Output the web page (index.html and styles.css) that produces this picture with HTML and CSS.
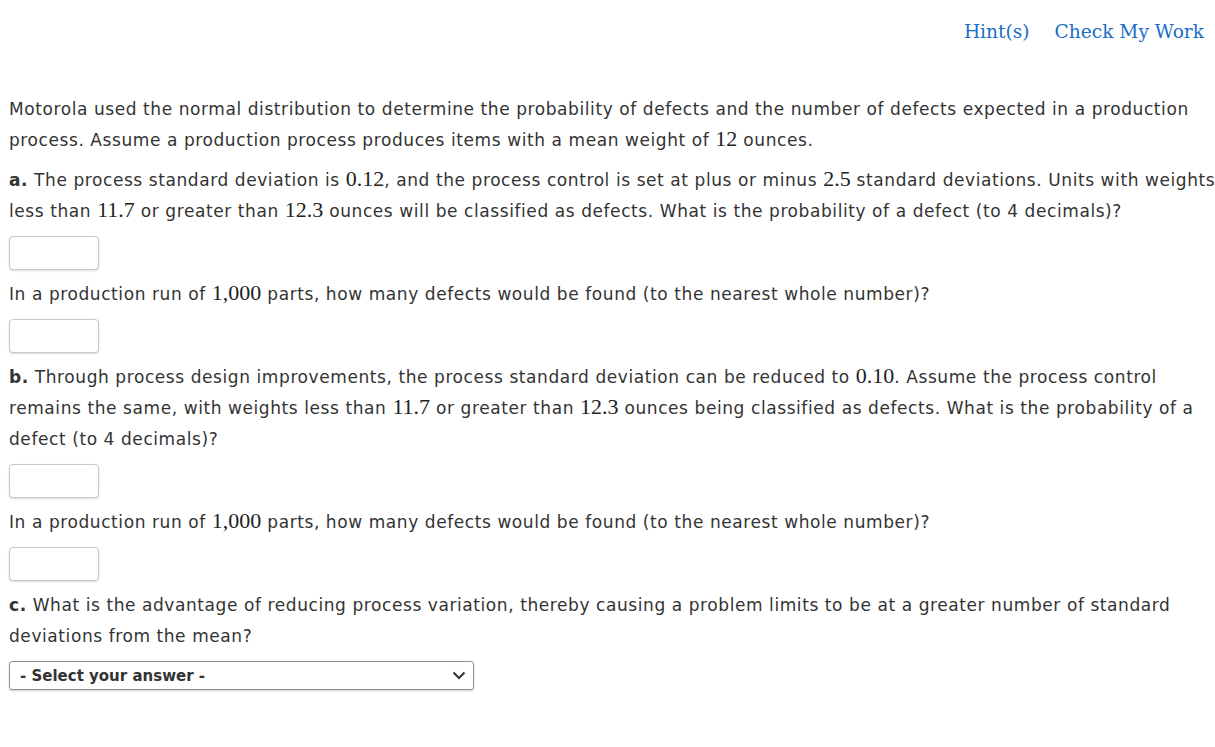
FILE: index.html
```html
<!DOCTYPE html>
<html>
<head>
<meta charset="utf-8">
<link rel="stylesheet" href="styles.css">
</head>
<body>
<div class="page">
  <div class="toolbar">
    <a class="tool-link" href="#">Hint(s)</a>
    <a class="tool-link" href="#">Check My Work</a>
  </div>
  <div class="content">
    <p>Motorola used the normal distribution to determine the probability of defects and the number of defects expected in a production process. Assume a production process produces items with a mean weight of <span class="m">12</span> ounces.</p>
    <p><b>a.</b> The process standard deviation is <span class="m">0.12</span>, and the process control is set at plus or minus <span class="m">2.5</span> standard deviations. Units with weights less than <span class="m">11.7</span> or greater than <span class="m">12.3</span> ounces will be classified as defects. What is the probability of a defect (to 4 decimals)?</p>
    <div class="answer"><input class="box" type="text"></div>
    <p>In a production run of <span class="m">1,000</span> parts, how many defects would be found (to the nearest whole number)?</p>
    <div class="answer"><input class="box" type="text"></div>
    <p><b>b.</b> Through process design improvements, the process standard deviation can be reduced to <span class="m">0.10</span>. Assume the process control remains the same, with weights less than <span class="m">11.7</span> or greater than <span class="m">12.3</span> ounces being classified as defects. What is the probability of a defect (to 4 decimals)?</p>
    <div class="answer"><input class="box" type="text"></div>
    <p>In a production run of <span class="m">1,000</span> parts, how many defects would be found (to the nearest whole number)?</p>
    <div class="answer"><input class="box" type="text"></div>
    <p><b>c.</b> What is the advantage of reducing process variation, thereby causing a problem limits to be at a greater number of standard deviations from the mean?</p>
    <div class="answer">
      <div class="select">
        <span class="select-label">- Select your answer -</span>
        <svg class="chev" width="14" height="9" viewBox="0 0 14 9"><path d="M1.5 1.5 L7 7 L12.5 1.5" fill="none" stroke="#333" stroke-width="2"/></svg>
      </div>
    </div>
  </div>
</div>
</body>
</html>
```

FILE: styles.css
```css
html, body {
  margin: 0;
  padding: 0;
  background: #fff;
  overflow: hidden;
}
.page {
  width: 100%;
}
.toolbar {
  display: flex;
  justify-content: flex-end;
  gap: 25px;
  padding: 18px 11px 0 0;
  height: 58px;
  box-sizing: border-box;
}
.tool-link {
  font-family: "DejaVu Serif", serif;
  font-size: 18.6px;
  color: #1a6ec8;
  text-decoration: none;
  line-height: 28px;
}
.content {
  width: 1226px;
  box-sizing: border-box;
  padding: 0 0 0 9px;
  margin-top: 36px;
  font-family: "DejaVu Sans", sans-serif;
  font-size: 17px;
  letter-spacing: 0.58px;
  color: #333;
}
.content p {
  margin: 0 0 9px 0;
  line-height: 31px;
}
.content b {
  font-weight: bold;
}
.m {
  font-family: "Liberation Serif", serif;
  font-size: 22px;
  letter-spacing: 0;
  line-height: 1;
  color: #222;
}
.answer {
  margin: 0 0 9px 0;
}
.box {
  display: block;
  width: 90px;
  height: 34px;
  box-sizing: border-box;
  border: 1px solid #c8c8c8;
  border-radius: 4px;
  box-shadow: 0 1px 2px rgba(0,0,0,0.15);
  margin: 0;
  padding: 0;
}
.select {
  width: 465px;
  height: 29px;
  box-sizing: border-box;
  border: 1px solid #8f8f8f;
  border-radius: 3px;
  box-shadow: 0 1px 2px rgba(0,0,0,0.2);
  display: flex;
  align-items: center;
  justify-content: space-between;
  padding: 0 7px 0 10px;
}
.select-label {
  font-family: "DejaVu Sans", sans-serif;
  font-weight: bold;
  font-size: 15px;
  letter-spacing: 0;
  color: #333;
}
```
